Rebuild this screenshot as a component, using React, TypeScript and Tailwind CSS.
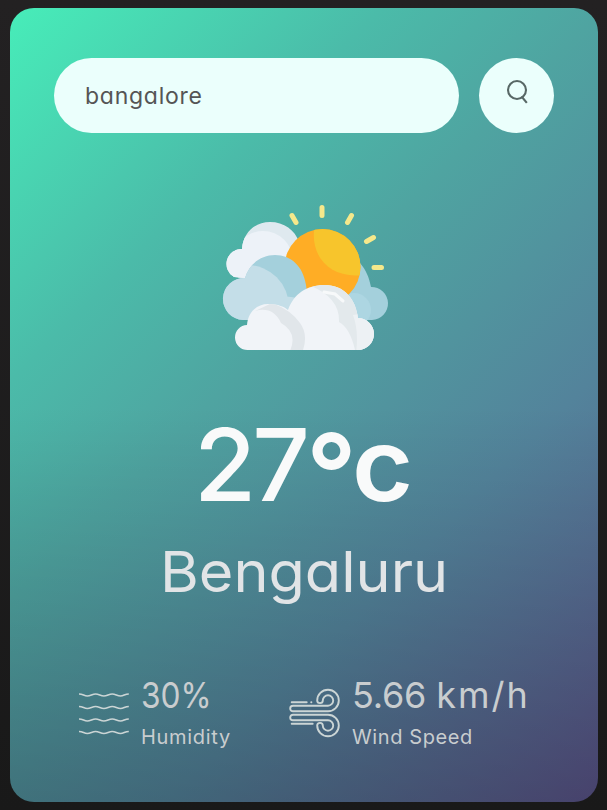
function WeatherIcon() {
  return (
    <svg viewBox="0 0 190 165" className="block h-[165px] w-[190px]">
      <defs>
        <clipPath id="sunDisc"><circle cx="112.5" cy="72" r="38" /></clipPath>
        <clipPath id="backCloud"><path d="M24 82a15 15 0 0 1 8-28C33 38 45 27 60 27c14 0 25 8 29 20l-10 40Z" /></clipPath>
        <clipPath id="middleCloud"><path d="M33 125a21 21 0 1 1 2-42C39 69 51 60 65 60c16 0 28 11 31 30l5 35Z" /></clipPath>
        <clipPath id="frontCloud"><path d="M38 155a12.500 12.500 0 0 1-1-25C38 117 47 109 58 109c10 0 17 3 20 6C84 99 96 90 115 90c19 0 31 14 33 33a16 16 0 0 1 0 32Z" /></clipPath>
      </defs>
      <g stroke="#f5e88b" strokeWidth="5" strokeLinecap="round">
        <path d="m82 20.500 4 7M112 12.500v8M141.500 20.500l-4 7M156.500 46.500l7-4M164 72.500h7.500" />
      </g>
      <path d="M138 125h24a16.500 16.500 0 1 0-1-33c-2-10-5-17-11-24l-20 20Z" fill="#a4d0dc" />
      <circle cx="144" cy="115" r="17" fill="#add6e2" />
      <g clipPath="url(#backCloud)">
        <path fill="#dfe9ef" d="M15 20h90v80H15z" />
        <circle cx="53" cy="66" r="30" fill="#edf2f8" />
        <circle cx="29" cy="70" r="16" fill="#edf2f8" />
      </g>
      <circle cx="112.500" cy="72" r="38" fill="#ffad25" />
      <path d="M105 30C99 57 116 84 153 80V30Z" fill="#f7c52c" clipPath="url(#sunDisc)" />
      <g clipPath="url(#middleCloud)">
        <path fill="#a4d0dc" d="M10 55h95v75H10z" />
        <circle cx="37" cy="112" r="42" fill="#c4dee8" />
        <path d="M75 102q10-2 22 7v16H65Z" fill="#c4dee8" />
      </g>
      <g clipPath="url(#frontCloud)">
        <path fill="#f1f4f8" d="M20 85h150v75H20z" />
        <path d="M101 91q29 12 28 36 11 6 16 28l6 3V85h-50Z" fill="#e3e9ec" />
        <path d="M143 120q6 16 3 38h22v-42Z" fill="#edf1f4" />
        <path d="M45 116q18-5 26 12 18 10 8 30h13q7-18-2-30-9-13-28-20Z" fill="#e1e6ea" />
        <path d="m114 97 11 2 8 7" fill="none" stroke="#f7f9fa" strokeWidth="3" strokeLinecap="round" />
      </g>
    </svg>
  );
}

function SearchIcon() {
  return (
    <svg viewBox="0 0 24 26" className="mb-[9px] h-[26px] w-6" fill="none" stroke="#586866" strokeWidth="2.100">
      <circle cx="12" cy="12" r="9" />
      <path d="m16.600 18.500 5.200 6.300" />
    </svg>
  );
}

function HumidityIcon() {
  return (
    <svg viewBox="0 0 52 50" className="h-[50px] w-[52px]" fill="none" stroke="#cbd5d5" strokeWidth="1.700">
      {[5, 17.5, 30, 42.5].map((y) => (
        <path key={y} d={`M1 ${y - 1}c4 0 5 2 8.300 2s5-2 8.300-2 5 2 8.300 2 5-2 8.300-2 5 2 8.300 2 4.300-2 8.300-2`} />
      ))}
    </svg>
  );
}

function WindIcon() {
  return (
    <svg viewBox="0 0 52 52" className="h-[52px] w-[52px]" fill="none" stroke="#cbd5d5" strokeWidth="1.900" strokeLinecap="round">
      <path d="M2.700 15.300h15M22.200 15.300h.2M2.700 36.700h21" />
      <path d="M39 24.300H4a2.800 2.800 0 0 1 0-5.600H39a5.200 5.200 0 1 0-5.200-5.200c0 3.500-5.600 3.500-5.600 0a10.800 10.800 0 1 1 10.800 10.800Z" />
      <path d="M39 27.700H4a2.800 2.800 0 0 0 0 5.600H39a5.200 5.200 0 1 1-5.200 5.200c0-3.500-5.600-3.500-5.600 0a10.800 10.800 0 1 0 10.800-10.800Z" />
    </svg>
  );
}

export default function App() {
  return (
    <div className="h-[810px] w-[607px] bg-linear-to-b from-[#232122] to-[#191919] pt-2 pl-2.5 font-[Inter,'Liberation_Sans',sans-serif] [font-feature-settings:'cv11']">
      <main className="h-[794px] w-[588px] overflow-hidden rounded-[24px] bg-[linear-gradient(to_bottom,transparent_50%,rgba(0,0,0,0.22)_100%),linear-gradient(135deg,#47edb9_0%,#4bbba9_27%,#4fa4a1_43%,#53839b_69%,#5b548a_100%)]">
        <div className="flex gap-5 pt-[50px] pl-11">
          <input aria-label="City" defaultValue="bangalore" className="h-[75px] w-[405px] rounded-full bg-[#ebfffc] pt-px pr-8 pl-[31px] text-[23px] tracking-[0.75px] text-[#555] outline-none" />
          <button aria-label="Search" className="flex h-[75px] w-[75px] items-center justify-center rounded-full bg-[#ebfffc]"><SearchIcon /></button>
        </div>
        <div className="mt-[62px] pl-[200px]"><WeatherIcon /></div>
        <h1 className="mt-[40px] flex h-[128px] pl-[184px] text-[101px] leading-[128px] font-medium text-[#f9fafa]">
          <span className="tracking-[-4px]">27</span>
          <span className="pt-[9px] text-[111px] leading-[128px] font-semibold tracking-[-5px]">°</span>
          <span className="origin-left scale-x-[1.04] font-semibold">c</span>
        </h1>
        <h2 className="mt-[8px] -ml-[8px] h-[72px] w-fit origin-left scale-x-[1.06] pl-[149px] text-[56px] leading-[72px] text-[#e1e4e6]">Bengaluru</h2>
        <div className="mt-[61px] flex text-[#c9cdcf]">
          <div className="ml-[68px] flex w-[211px]">
            <div className="w-[63px] pt-[21px]"><HumidityIcon /></div>
            <div>
              <p className="w-fit origin-left scale-x-[0.88] text-[36px] leading-[52px]">30%</p>
              <p className="text-[20px] leading-[32px] tracking-[0.7px]">Humidity</p>
            </div>
          </div>
          <div className="flex">
            <div className="w-[63px] pt-[18px]"><WindIcon /></div>
            <div className="whitespace-nowrap">
              <p className="text-[36px] leading-[52px]"><span className="tracking-[-0.2px]">5.66 </span><span className="tracking-[2px]">km/h</span></p>
              <p className="text-[20px] leading-[32px] tracking-[0.6px]">Wind Speed</p>
            </div>
          </div>
        </div>
      </main>
    </div>
  );
}
